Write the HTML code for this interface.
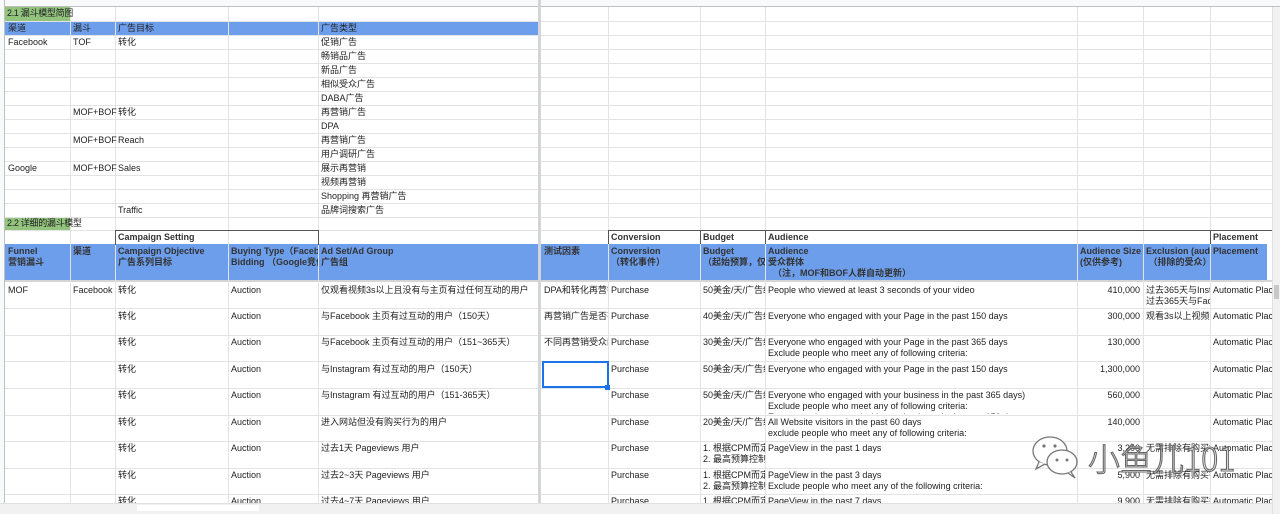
<!DOCTYPE html>
<html><head><meta charset="utf-8"><style>
*{margin:0;padding:0;box-sizing:border-box}
body{width:1280px;height:514px;overflow:hidden;background:#fff;position:relative;font-family:"Liberation Sans","Noto Sans CJK SC",sans-serif;font-size:9px;color:#222}
div{position:absolute}
.h{height:1px;background:#e2e3e3;left:5px;width:1267px}
.v{width:1px;background:#e2e3e3;top:7px;height:496px}
.t{white-space:nowrap;overflow:hidden;line-height:11px;padding-left:3px}
.b{font-weight:bold;color:#333}
.bl{background:#6d9eeb}
.g{background:#93c47d}
.r{text-align:right;padding-right:3px}
</style></head><body>
<div style="left:0;top:0;width:1280px;height:7px;background:#f8f9fa;border-bottom:1px solid #c0c0c0"></div>
<div style="left:0;top:0;width:5px;height:514px;background:#f8f9fa;border-right:1px solid #c0c0c0"></div>
<div class="bl" style="left:5px;top:21px;width:533px;height:14px"></div>
<div class="bl" style="left:5px;top:244px;width:533px;height:36px"></div>
<div class="bl" style="left:541px;top:244px;width:726px;height:36px"></div>
<div style="left:5px;top:280px;width:1267px;height:2px;background:#d5d5d5"></div>
<div class="g" style="left:5px;top:7px;width:65px;height:14px"></div>
<div class="g" style="left:5px;top:217px;width:65px;height:13px"></div>
<div class="h" style="top:21px"></div><div class="h" style="top:35px"></div><div class="h" style="top:49px"></div><div class="h" style="top:63px"></div><div class="h" style="top:77px"></div><div class="h" style="top:91px"></div><div class="h" style="top:105px"></div><div class="h" style="top:119px"></div><div class="h" style="top:133px"></div><div class="h" style="top:147px"></div><div class="h" style="top:161px"></div><div class="h" style="top:175px"></div><div class="h" style="top:189px"></div><div class="h" style="top:203px"></div><div class="h" style="top:217px"></div><div class="h" style="top:230px"></div>
<div class="h" style="top:308px"></div><div class="h" style="top:335px"></div><div class="h" style="top:361px"></div><div class="h" style="top:388px"></div><div class="h" style="top:415px"></div><div class="h" style="top:441px"></div><div class="h" style="top:468px"></div><div class="h" style="top:494px"></div>
<div class="v" style="left:70px"></div><div class="v" style="left:115px"></div><div class="v" style="left:228px"></div><div class="v" style="left:318px"></div>
<div class="v" style="left:608px"></div><div class="v" style="left:700px"></div><div class="v" style="left:765px"></div><div class="v" style="left:1077px"></div><div class="v" style="left:1143px"></div><div class="v" style="left:1210px"></div>
<div style="left:115px;top:230px;width:204px;height:15px;border:1px solid #555;border-bottom:none"></div>
<div style="left:608px;top:230px;width:664px;height:1px;background:#555"></div>
<div style="left:608px;top:230px;width:1px;height:14px;background:#555"></div>
<div style="left:700px;top:230px;width:1px;height:14px;background:#555"></div>
<div style="left:765px;top:230px;width:1px;height:14px;background:#555"></div>
<div style="left:1210px;top:230px;width:1px;height:14px;background:#555"></div>
<div style="left:538px;top:0;width:3px;height:514px;background:#d3d5d8"></div>
<div style="left:1272px;top:7px;width:8px;height:507px;background:#f1f1f1;border-left:1px solid #e0e0e0"></div>
<div style="left:1274px;top:285px;width:5px;height:14px;background:#c8c8c8"></div>
<div style="left:0;top:503px;width:1272px;height:11px;background:#f1f1f1;border-top:1px solid #e0e0e0"></div>
<div style="left:137px;top:505px;width:122px;height:6px;background:#fff"></div>
<div class="t" style="left:5px;top:8px;width:70px;padding-left:2px;letter-spacing:-0.3px">2.1 漏斗模型简图</div>
<div class="t" style="left:5px;top:23px">渠道</div><div class="t" style="left:70px;top:23px">漏斗</div><div class="t" style="left:115px;top:23px">广告目标</div><div class="t" style="left:318px;top:23px">广告类型</div>
<div class="t" style="left:5px;top:37px">Facebook</div><div class="t" style="left:70px;top:37px">TOF</div><div class="t" style="left:115px;top:37px">转化</div><div class="t" style="left:318px;top:37px">促销广告</div>
<div class="t" style="left:318px;top:51px">畅销品广告</div>
<div class="t" style="left:318px;top:65px">新品广告</div>
<div class="t" style="left:318px;top:79px">相似受众广告</div>
<div class="t" style="left:318px;top:93px">DABA广告</div>
<div class="t" style="left:70px;top:107px">MOF+BOF</div><div class="t" style="left:115px;top:107px">转化</div><div class="t" style="left:318px;top:107px">再营销广告</div>
<div class="t" style="left:318px;top:121px">DPA</div>
<div class="t" style="left:70px;top:135px">MOF+BOF</div><div class="t" style="left:115px;top:135px">Reach</div><div class="t" style="left:318px;top:135px">再营销广告</div>
<div class="t" style="left:318px;top:149px">用户调研广告</div>
<div class="t" style="left:5px;top:163px">Google</div><div class="t" style="left:70px;top:163px">MOF+BOF</div><div class="t" style="left:115px;top:163px">Sales</div><div class="t" style="left:318px;top:163px">展示再营销</div>
<div class="t" style="left:318px;top:177px">视频再营销</div>
<div class="t" style="left:318px;top:191px">Shopping 再营销广告</div>
<div class="t" style="left:115px;top:205px">Traffic</div><div class="t" style="left:318px;top:205px">品牌词搜索广告</div>
<div class="t" style="left:5px;top:218px;width:100px;padding-left:2px;letter-spacing:-0.3px">2.2 详细的漏斗模型</div>
<div class="t b" style="left:115px;top:232px">Campaign Setting</div>
<div class="t b" style="left:608px;top:232px">Conversion</div><div class="t b" style="left:700px;top:232px">Budget</div><div class="t b" style="left:765px;top:232px">Audience</div><div class="t b" style="left:1210px;top:232px">Placement</div>
<div class="t b" style="left:5px;top:246px">Funnel<br>营销漏斗</div>
<div class="t b" style="left:70px;top:246px">渠道</div>
<div class="t b" style="left:115px;top:246px">Campaign Objective<br>广告系列目标</div>
<div class="t b" style="left:228px;top:246px;width:90px">Buying Type（Facebook<br>Bidding （Google竞价</div>
<div class="t b" style="left:318px;top:246px">Ad Set/Ad Group<br>广告组</div>
<div class="t b" style="left:541px;top:246px">测试因素</div>
<div class="t b" style="left:608px;top:246px">Conversion<br>（转化事件）</div>
<div class="t b" style="left:700px;top:246px;width:65px">Budget<br>（起始预算，仅供参考）</div>
<div class="t b" style="left:765px;top:246px">Audience<br>受众群体<br>&nbsp;&nbsp;（注，MOF和BOF人群自动更新）</div>
<div class="t b" style="left:1077px;top:246px;width:66px">Audience Size<br>(仅供参考)</div>
<div class="t b" style="left:1143px;top:246px;width:67px">Exclusion (audience)<br>&nbsp;（排除的受众）</div>
<div class="t b" style="left:1210px;top:246px">Placement</div>
<div class="t" style="left:5px;top:285px">MOF</div><div class="t" style="left:70px;top:285px">Facebook</div>
<div class="t" style="left:115px;top:285px">转化</div><div class="t" style="left:228px;top:285px">Auction</div><div class="t" style="left:318px;top:285px">仅观看视频3s以上且没有与主页有过任何互动的用户</div>
<div class="t" style="left:541px;top:285px;width:67px">DPA和转化再营销</div><div class="t" style="left:608px;top:285px">Purchase</div><div class="t" style="left:700px;top:285px;width:65px">50美金/天/广告组</div><div class="t" style="left:765px;top:285px">People who viewed at least 3 seconds of your video</div><div class="t r" style="left:1077px;top:285px;width:66px">410,000</div><div class="t" style="left:1143px;top:285px;width:67px">过去365天与Instagram<br>过去365天与Facebook</div><div class="t" style="left:1210px;top:285px;width:62px">Automatic Placements</div>
<div class="t" style="left:115px;top:311px">转化</div><div class="t" style="left:228px;top:311px">Auction</div><div class="t" style="left:318px;top:311px">与Facebook 主页有过互动的用户（150天）</div>
<div class="t" style="left:541px;top:311px;width:67px">再营销广告是否有效</div><div class="t" style="left:608px;top:311px">Purchase</div><div class="t" style="left:700px;top:311px;width:65px">40美金/天/广告组</div><div class="t" style="left:765px;top:311px">Everyone who engaged with your Page in the past 150 days</div><div class="t r" style="left:1077px;top:311px;width:66px">300,000</div><div class="t" style="left:1143px;top:311px;width:67px">观看3s以上视频的</div><div class="t" style="left:1210px;top:311px;width:62px">Automatic Placements</div>
<div class="t" style="left:115px;top:337px">转化</div><div class="t" style="left:228px;top:337px">Auction</div><div class="t" style="left:318px;top:337px">与Facebook 主页有过互动的用户（151~365天）</div>
<div class="t" style="left:541px;top:337px;width:67px">不同再营销受众的</div><div class="t" style="left:608px;top:337px">Purchase</div><div class="t" style="left:700px;top:337px;width:65px">30美金/天/广告组</div><div class="t" style="left:765px;top:337px;height:23px">Everyone who engaged with your Page in the past 365 days<br>Exclude people who meet any of following criteria:<br>Everyone who engaged with your Page in the past 150 days</div><div class="t r" style="left:1077px;top:337px;width:66px">130,000</div><div class="t" style="left:1210px;top:337px;width:62px">Automatic Placements</div>
<div style="left:542px;top:361px;width:67px;height:27px;border:2px solid #1a73e8"></div>
<div style="left:605px;top:385px;width:5px;height:5px;background:#1a73e8"></div>
<div class="t" style="left:115px;top:364px">转化</div><div class="t" style="left:228px;top:364px">Auction</div><div class="t" style="left:318px;top:364px">与Instagram 有过互动的用户（150天）</div>
<div class="t" style="left:608px;top:364px">Purchase</div><div class="t" style="left:700px;top:364px;width:65px">50美金/天/广告组</div><div class="t" style="left:765px;top:364px">Everyone who engaged with your Page in the past 150 days</div><div class="t r" style="left:1077px;top:364px;width:66px">1,300,000</div><div class="t" style="left:1210px;top:364px;width:62px">Automatic Placements</div>
<div class="t" style="left:115px;top:390px">转化</div><div class="t" style="left:228px;top:390px">Auction</div><div class="t" style="left:318px;top:390px">与Instagram 有过互动的用户（151-365天）</div>
<div class="t" style="left:608px;top:390px">Purchase</div><div class="t" style="left:700px;top:390px;width:65px">50美金/天/广告组</div><div class="t" style="left:765px;top:390px;height:24px">Everyone who engaged with your business in the past 365 days)<br>Exclude people who meet any of following criteria:<br>Everyone who engaged with your business in the past 150 days</div><div class="t r" style="left:1077px;top:390px;width:66px">560,000</div><div class="t" style="left:1210px;top:390px;width:62px">Automatic Placements</div>
<div class="t" style="left:115px;top:417px">转化</div><div class="t" style="left:228px;top:417px">Auction</div><div class="t" style="left:318px;top:417px">进入网站但没有购买行为的用户</div>
<div class="t" style="left:608px;top:417px">Purchase</div><div class="t" style="left:700px;top:417px;width:65px">20美金/天/广告组</div><div class="t" style="left:765px;top:417px;height:23px">All Website visitors in the past 60 days<br>exclude people who meet any of following criteria:<br>Add To Cart in the past 60 days</div><div class="t r" style="left:1077px;top:417px;width:66px">140,000</div><div class="t" style="left:1210px;top:417px;width:62px">Automatic Placements</div>
<div class="t" style="left:115px;top:443px">转化</div><div class="t" style="left:228px;top:443px">Auction</div><div class="t" style="left:318px;top:443px">过去1天 Pageviews 用户</div>
<div class="t" style="left:608px;top:443px">Purchase</div><div class="t" style="left:700px;top:443px;width:65px">1. 根据CPM而定<br>2. 最高预算控制</div><div class="t" style="left:765px;top:443px">PageView in the past 1 days</div><div class="t r" style="left:1077px;top:443px;width:66px">3,200</div><div class="t" style="left:1143px;top:443px;width:67px">无需排除有购买行为</div><div class="t" style="left:1210px;top:443px;width:62px">Automatic Placements</div>
<div class="t" style="left:115px;top:470px">转化</div><div class="t" style="left:228px;top:470px">Auction</div><div class="t" style="left:318px;top:470px">过去2~3天 Pageviews 用户</div>
<div class="t" style="left:608px;top:470px">Purchase</div><div class="t" style="left:700px;top:470px;width:65px">1. 根据CPM而定<br>2. 最高预算控制</div><div class="t" style="left:765px;top:470px;height:23px">PageView in the past 3 days<br>Exclude people who meet any of the following criteria:<br>PageView in the past 1 days</div><div class="t r" style="left:1077px;top:470px;width:66px">5,900</div><div class="t" style="left:1143px;top:470px;width:67px">无需排除有购买行为</div><div class="t" style="left:1210px;top:470px;width:62px">Automatic Placements</div>
<div class="t" style="left:115px;top:496px;height:7px">转化</div><div class="t" style="left:228px;top:496px;height:7px">Auction</div><div class="t" style="left:318px;top:496px;height:7px">过去4~7天 Pageviews 用户</div>
<div class="t" style="left:608px;top:496px;height:7px">Purchase</div><div class="t" style="left:700px;top:496px;width:65px;height:7px">1. 根据CPM而定</div><div class="t" style="left:765px;top:496px;height:7px">PageView in the past 7 days</div><div class="t r" style="left:1077px;top:496px;width:66px;height:7px">9,900</div><div class="t" style="left:1143px;top:496px;width:67px;height:7px">无需排除有购买行为</div><div class="t" style="left:1210px;top:496px;width:62px;height:7px">Automatic Placements</div>
<svg style="position:absolute;left:1030px;top:433px" width="52" height="48" viewBox="0 0 52 48"><g fill="#fff" stroke="#777" stroke-width="1.3"><ellipse cx="20" cy="18" rx="17" ry="14"/><path d="M9 29 L6 36 L15 31"/><ellipse cx="32" cy="29" rx="15" ry="12"/><path d="M41 39 L45 45 L38 40"/></g><g fill="#777"><circle cx="14" cy="13" r="1.6"/><circle cx="25" cy="13" r="1.6"/><circle cx="27" cy="27" r="1.5"/><circle cx="37" cy="27" r="1.5"/></g></svg>
<div style="left:1088px;top:438px;white-space:nowrap;font-size:32px;line-height:40px;color:rgba(255,255,255,0.6);-webkit-text-stroke:1.1px #666;font-family:'Noto Sans CJK SC','Liberation Sans',sans-serif;font-weight:300">小鱼儿101</div>
</body></html>
